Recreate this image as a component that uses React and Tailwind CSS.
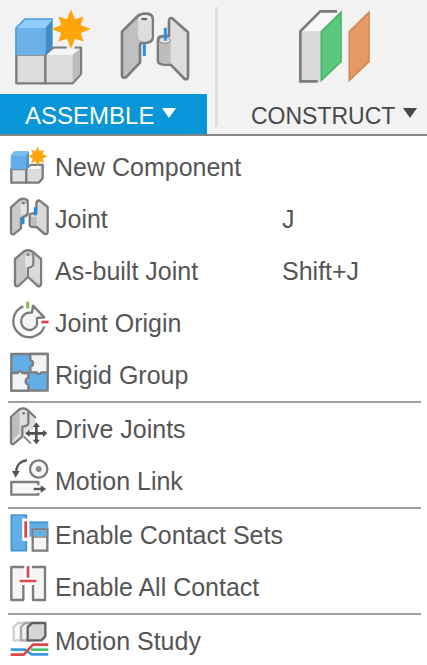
import clsx from "clsx";

const GRAY = "#7c7c7c";
const BLUE = "#62aee6";

// Eight pointed "new" star
function Star({ cx, cy, r }) {
  const points = Array.from({ length: 16 }, (_, i) => {
    const radius = i % 2 ? r * 0.54 : i % 4 ? r * 0.9 : r;
    const angle = (i * Math.PI) / 8;
    return `${cx + radius * Math.sin(angle)},${cy - radius * Math.cos(angle)}`;
  }).join(" ");
  return <polygon points={points} fill="#fda50a" />;
}

function AssembleIcon() {
  return (
    <svg viewBox="0 0 240 234" className="h-[78px] w-20" aria-hidden="true">
      <g stroke={GRAY} strokeWidth="7" strokeLinejoin="round">
        <path d="M7 140H94V226H7Z" fill="#dcdcdc" />
        <path d="M94 141L118 119H201V198L176 226H94Z" fill="#dcdcdc" />
      </g>
      <path d="M98 141L119 122H198L176 141Z" fill="#f6f6f6" />
      <path d="M176 141L198 122V197L176 223Z" fill="#bcbcbc" />
      <path d="M6 60L33 33H116L94 60Z" fill="#8fcdfc" />
      <path d="M5 60H94V141H5Z" fill="#69b1e7" />
      <path d="M94 60L116 33V118L94 141Z" fill="#3d8dca" />
      <path d="M6 141V60L33 33H116" fill="none" stroke="#4d9bd5" strokeWidth="5" />
      <path d="M158 119H182" stroke="#f2f2f2" strokeWidth="9" />
      <Star cx={171} cy={63} r={59} />
    </svg>
  );
}

function JointToolIcon() {
  return (
    <svg viewBox="0 0 210 210" className="size-[70px]" aria-hidden="true">
      <g stroke={GRAY} strokeWidth="8" strokeLinejoin="round">
        <path d="M6 59L50 15Q60 5 76 5Q97 5 98 18V78Q96 92 74 93Q60 92 60 98V152L18 196Q6 200 6 190Z" fill="#c0c0c0" />
        <path d="M158 20L204 61V194Q204 204 194 201L152 158H134Q114 157 114 146V84Q114 72 130 72H147V26Q149 14 158 20Z" fill="#dedede" />
      </g>
      <path d="M54 22Q60 15 72 22Q84 26 95 20V76Q94 87 76 89Q60 90 54 76Z" fill="#dedede" />
      <ellipse cx="75" cy="18" rx="19" ry="9" fill="#efefef" />
      <ellipse cx="73" cy="21" rx="10" ry="4" fill="#666666" />
      <path d="M118 88Q133 98 152 88V155H134Q118 154 118 145Z" fill="#bdbdbd" />
      <ellipse cx="134" cy="85" rx="17" ry="9" fill="#e7e7e7" stroke={GRAY} strokeWidth="3" />
      <path d="M73 97V132M136 47V86" stroke="#2694ec" strokeWidth="9" />
    </svg>
  );
}

function ConstructIcon() {
  return (
    <svg viewBox="0 0 225 231" className="h-[77px] w-[75px]" aria-hidden="true">
      <path d="M10 70L70 10H132L72 70Z" fill="#f8f8f8" />
      <path d="M10 70H72V222H10Z" fill="#d9d9d9" />
      <path d="M62 220H10V70L70 10H120" fill="none" stroke={GRAY} strokeWidth="8" />
      <path d="M73 71L132 13V161L73 217Z" fill="#5bc87e" stroke="#48b56c" strokeWidth="5" />
      <path d="M157 71L216 13V161L157 217Z" fill="#e69865" stroke="#d58852" strokeWidth="5" />
    </svg>
  );
}

function MenuSvg({ children }) {
  return (
    <svg
      viewBox="-3 0 120 120"
      className="size-10 overflow-visible"
      fill="none"
      stroke={GRAY}
      strokeWidth="7"
      strokeLinejoin="round"
      aria-hidden="true"
    >
      {children}
    </svg>
  );
}

const icons = {
  newComponent: (
    <MenuSvg>
      <path d="M7 66H52V107H7Z" fill="#e2e2e2" />
      <path d="M52 66L65 54H101V94L89 107H52Z" fill="#dcdcdc" />
      <path d="M56 66L66 57H98L88 66Z" fill="#fafafa" stroke="none" />
      <path d="M5 67V26L16 13H60V56L52 67Z" fill={BLUE} stroke="none" />
      <path d="M5 26L16 13H60L52 26Z" fill="#79bdf0" stroke="none" />
      <path d="M52 26L60 16V58L52 67Z" fill="#4896d3" stroke="none" />
      <g stroke="none">
        <Star cx={86} cy={28} r={30} />
      </g>
    </MenuSvg>
  ),
  joint: (
    <MenuSvg>
      <path d="M6 25L30 3Q44 -5 56 4V42Q55 51 45 53L36 58V88L14 106Q6 107 6 99Z" fill="#c9c9c9" />
      <path d="M92 5L116 24V99Q115 108 107 105L83 84H70Q62 84 62 76V50Q62 43 72 43H82V12Q85 3 92 5Z" fill="#dadada" />
      <path d="M34 14Q44 20 53 12V40Q48 49 36 48Z" fill="#e4e4e4" stroke="none" />
      <circle cx="43" cy="12" r="4" fill="#777777" stroke="none" />
      <path d="M66 54H83V80H68Z" fill="#bdbdbd" stroke="none" />
      <path d="M42 54V76M79 25V49" stroke="#1f8de4" strokeWidth="9" />
    </MenuSvg>
  ),
  asBuiltJoint: (
    <MenuSvg>
      <path d="M18 24L45 1Q59 -6 71 2L96 24V100Q94 109 86 105L57 78L28 105Q18 108 18 99Z" fill="#c8c8c8" />
      <path d="M75 10L93 26V99L60 76V54L75 45Z" fill="#d9d9d9" stroke="none" />
      <path d="M48 13Q60 19 71 12V42Q65 50 50 49Z" fill="#e4e4e4" stroke="none" />
      <path d="M73 6V42Q68 49 57 51V78" strokeWidth="6" />
      <circle cx="57" cy="11" r="4" fill="#777777" stroke="none" />
    </MenuSvg>
  ),
  jointOrigin: (
    <MenuSvg>
      <path d="M63 28L72 26V8L106 43H86V54A25 27 0 1 1 63 28Z" fill="#f4f4f4" stroke="none" />
      <path d="M43 10A48 48 0 1 0 106 71" />
      <path d="M84 66A25 26 0 1 1 62 29H69L72 8L106 43L84 45V66" />
      <path d="M56 -4V16" stroke="#86b84a" strokeWidth="9" />
      <path d="M97 57H119" stroke="#e94141" strokeWidth="8" />
    </MenuSvg>
  ),
  rigidGroup: (
    <MenuSvg>
      <path d="M7 -3H116V107H7Z" fill={BLUE} />
      <path d="M64 -3H116V52H97Q95 57 90 57Q85 57 83 52H64V35Q72 34 72 25Q72 17 64 16Z" fill="#f3f3f3" />
      <path d="M7 54H26Q28 49 33 49Q38 49 40 54H58V68Q50 70 50 79Q50 87 58 89V107H7Z" fill="#f3f3f3" />
    </MenuSvg>
  ),
  driveJoints: (
    <MenuSvg>
      <path d="M6 24L31 1Q44 -5 54 2L79 24V52L58 80L40 76L14 105Q6 107 6 99Z" fill="#dedede" stroke="none" />
      <path d="M9 27L32 7V72L9 96Z" fill="#bdbdbd" stroke="none" />
      <path d="M78 28V24L54 2Q44 -5 31 1L6 24V99Q6 107 14 105L40 82V53Q58 51 58 42V8" />
      <path d="M44 82L66 104" strokeWidth="5" />
      <circle cx="44" cy="13" r="4" fill="#777777" stroke="none" />
      <path d="M82 44V103M53 73H112" stroke="#ffffff" strokeWidth="15" />
      <g stroke="#505050">
        <path d="M82 50V97M59 73H106" strokeWidth="8" />
        <path d="M82 40L93 54H71ZM82 106L93 92H71ZM49 73L62 62V84ZM115 73L102 62V84Z" fill="#505050" stroke="none" />
      </g>
    </MenuSvg>
  ),
  motionLink: (
    <MenuSvg>
      <circle cx="89" cy="24" r="26" fill="#f6f6f6" />
      <circle cx="89" cy="24" r="9" fill="#8b8b8b" stroke="none" />
      <path d="M54 -2Q24 0 21 34" stroke="#555555" />
      <path d="M20 50L9 30H32Z" fill="#555555" stroke="none" />
      <path d="M88 73V63H7V101H88V96" fill="#f8f8f8" />
      <path d="M74 84H98" stroke="#555555" />
      <path d="M112 84L95 73V95Z" fill="#555555" stroke="none" />
    </MenuSvg>
  ),
  contactSets: (
    <MenuSvg>
      <path d="M53 10V0H7V108H53V78H40V10Z" fill={BLUE} stroke="none" />
      <path d="M52 11V0H7V107H52V78" stroke="#4593ce" strokeWidth="5" />
      <path d="M41 12H58V76H41Z" fill="#ffffff" stroke="none" />
      <path d="M50 19V68" stroke="#ec3d3d" strokeWidth="8" />
      <path d="M61 20H118V65H61Z" fill={BLUE} stroke="none" />
      <path d="M62 22H116" stroke="#4593ce" strokeWidth="5" />
      <path d="M71 43H115V107H71Z" fill="#f6f6f6" />
      <path d="M74 46H112V64H74Z" fill={BLUE} stroke="none" />
      <path d="M71 66H115" strokeWidth="4" />
    </MenuSvg>
  ),
  allContact: (
    <MenuSvg>
      <path d="M46 0H7V99H43V54M69 0H108V99H72V54" fill="#f5f5f5" />
      <path d="M33 42H82M57 -2V32" stroke="#ffffff" strokeWidth="18" />
      <path d="M32 42H82M57 -3V32" stroke="#d9484b" strokeWidth="8" />
    </MenuSvg>
  ),
  motionStudy: (
    <MenuSvg>
      <path d="M26 6H70V48L60 58H14V18Z" fill="#fafafa" stroke="#cfcfcf" />
      <path d="M48 6H88V48L78 58H36V18Z" fill="#f0f0f0" stroke="#a9a9a9" />
      <path d="M70 6H109V46L97 58H56V18Z" fill="#d5d5d5" stroke="#626262" />
      <path d="M5 86H48L68 100H118" stroke="#3b9ae3" strokeWidth="8" />
      <path d="M66 86H118" stroke="#4bc36d" strokeWidth="8" />
      <path d="M5 101H44L72 71H118" stroke="#db4747" strokeWidth="8" />
    </MenuSvg>
  ),
};

const menuGroups = [
  [
    { icon: "newComponent", label: "New Component" },
    { icon: "joint", label: "Joint", shortcut: "J" },
    { icon: "asBuiltJoint", label: "As-built Joint", shortcut: "Shift+J" },
    { icon: "jointOrigin", label: "Joint Origin" },
    { icon: "rigidGroup", label: "Rigid Group" },
  ],
  [
    { icon: "driveJoints", label: "Drive Joints" },
    { icon: "motionLink", label: "Motion Link" },
  ],
  [
    { icon: "contactSets", label: "Enable Contact Sets" },
    { icon: "allContact", label: "Enable All Contact" },
  ],
  [{ icon: "motionStudy", label: "Motion Study" }],
];

function Caret() {
  return (
    <svg viewBox="0 0 14 10" className="mb-1.5 h-2.5 w-3.5" aria-hidden="true">
      <path d="M0 0H14L7 10Z" fill="currentColor" />
    </svg>
  );
}

function MenuItem({ icon, label, shortcut }) {
  return (
    <button
      type="button"
      role="menuitem"
      className="grid h-13 w-full grid-cols-[40px_220px_1fr] items-center gap-x-[7px] px-2 text-left text-[25px] leading-8 whitespace-nowrap text-[#555555] hover:bg-gray-100"
    >
      {icons[icon]}
      <span>{label}</span>
      {shortcut && <span>{shortcut}</span>}
    </button>
  );
}

export default function App() {
  return (
    <div className="h-screen overflow-hidden bg-white font-['Liberation_Sans',Arial,sans-serif]">
      <header className="flex h-[136px] border-b-2 border-[#858585] bg-[#f2f2f2]">
        <section className="flex w-[207px] shrink-0 flex-col justify-between pt-2">
          <div className="flex items-start gap-[26px] pl-3.5">
            <button type="button" aria-label="New Component">
              <AssembleIcon />
            </button>
            <button type="button" aria-label="Joint" className="pt-1">
              <JointToolIcon />
            </button>
          </div>
          <button
            type="button"
            aria-expanded="true"
            className="flex h-10 items-center gap-2 bg-[#0896d8] pt-1 pl-[25px] text-2xl text-white"
          >
            ASSEMBLE
            <Caret />
          </button>
        </section>

        <div className="mx-2 my-[7px] w-[3px] shrink-0 bg-[#dedede]" />

        <section className="flex grow flex-col justify-between pt-2">
          <button type="button" aria-label="Offset Plane" className="ml-[71px] self-start">
            <ConstructIcon />
          </button>
          <button
            type="button"
            aria-expanded="false"
            className="flex h-10 items-center gap-2 pt-1 pl-[25px] text-[23px] text-[#484848]"
          >
            CONSTRUCT
            <Caret />
          </button>
        </section>
      </header>

      <div role="menu" className="pt-[5px]">
        {menuGroups.map((items, i) => (
          <div key={items[0].label}>
            <div className={clsx("mr-1.5 ml-2 h-0.5 bg-[#a0a0a0]", i === 0 && "hidden")} />
            {items.map((item) => (
              <MenuItem key={item.label} {...item} />
            ))}
          </div>
        ))}
      </div>
    </div>
  );
}
